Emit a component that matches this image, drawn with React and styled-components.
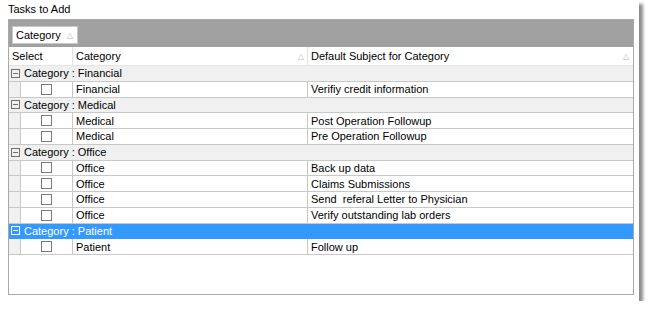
import React from 'react';
import styled, { createGlobalStyle } from 'styled-components';

// Global page styles
const GlobalStyle = createGlobalStyle`
  body {
    margin: 0;
    background: #ffffff;
    font-family: "Liberation Sans", Arial, sans-serif;
    font-size: 11px;
    color: #000000;
  }
`;

// Data
const groups = [
  { name: 'Financial', rows: [['Financial', 'Verifiy credit information']] },
  {
    name: 'Medical',
    rows: [
      ['Medical', 'Post Operation Followup'],
      ['Medical', 'Pre Operation Followup'],
    ],
  },
  {
    name: 'Office',
    rows: [
      ['Office', 'Back up data'],
      ['Office', 'Claims Submissions'],
      ['Office', 'Send  referal Letter to Physician'],
      ['Office', 'Verify outstanding lab orders'],
    ],
  },
  { name: 'Patient', selected: true, rows: [['Patient', 'Follow up']] },
];

// Window with drop shadow
const Window = styled.div`
  width: 639px;
  height: 301px;
  background: #ffffff;
  box-shadow: 4px 4px 3px rgba(0, 0, 0, 0.45);
  padding: 3px 0 0 8px;
  box-sizing: border-box;
`;

const Title = styled.div`
  height: 16px;
  line-height: 13px;
`;

const Grid = styled.div`
  width: 626px;
  height: 276px;
  border: 1px solid #a9a9a9;
  box-sizing: border-box;
  display: flex;
  flex-direction: column;
`;

const GroupPanel = styled.div`
  height: 27px;
  background: #a0a0a0;
  padding: 6px 0 0 3px;
  box-sizing: border-box;
`;

const Chip = styled.div`
  width: 66px;
  height: 18px;
  background: #ffffff;
  border: 1px solid #c8c8c8;
  box-sizing: border-box;
  display: flex;
  align-items: center;
  justify-content: space-between;
  padding: 0 4px 0 3px;
`;

const Tri = styled.span`
  color: #b8b8b8;
  font-size: 8px;
`;

const Row = styled.div`
  display: flex;
  flex: none;
  height: ${(p) => p.$h || 15.75}px;
  box-sizing: border-box;
  border-bottom: 1px solid ${(p) => p.$line || '#c8c8c8'};
  background: ${(p) => p.$bg || '#ffffff'};
  color: ${(p) => p.$color || '#000000'};
`;

const Cell = styled.div`
  width: ${(p) => p.$w}px;
  flex: ${(p) => (p.$w ? 'none' : '1')};
  display: flex;
  align-items: center;
  justify-content: ${(p) => (p.$center ? 'center' : 'space-between')};
  padding: 0 ${(p) => (p.$center ? 0 : 3)}px;
  box-sizing: border-box;
  border-right: 1px solid ${(p) => p.$line || '#c8c8c8'};
  white-space: pre;
`;

const Indent = styled.div`
  width: 12px;
  background: #f0f0f0;
  border-right: 1px solid #c8c8c8;
  box-sizing: border-box;
`;

const GroupLabel = styled.div`
  display: flex;
  align-items: center;
  gap: 4px;
  padding-left: 2px;
`;

const Box = styled.span`
  width: 9px;
  height: 9px;
  box-sizing: border-box;
  border: 1px solid ${(p) => p.$color};
  display: inline-flex;
  align-items: center;
  justify-content: center;
  &::after {
    content: '';
    width: 5px;
    height: 1px;
    background: ${(p) => p.$color};
  }
`;

const Check = styled.span`
  width: 11px;
  height: 11px;
  border: 1px solid #7a7a7a;
  background: #ffffff;
  box-sizing: border-box;
`;

const App = () => (
  <>
    <GlobalStyle />
    <Window>
      <Title>Tasks to Add</Title>
      <Grid>
        <GroupPanel>
          <Chip>
            Category <Tri>△</Tri>
          </Chip>
        </GroupPanel>
        <Row $h={19} $line="#e4e4e4">
          <Cell $w={64} $line="#e4e4e4">Select</Cell>
          <Cell $w={235} $line="#e4e4e4">
            Category <Tri>△</Tri>
          </Cell>
          <Cell $line="transparent">
            Default Subject for Category <Tri>△</Tri>
          </Cell>
        </Row>
        {groups.map((g) => (
          <React.Fragment key={g.name}>
            <Row
              $bg={g.selected ? '#3399ff' : '#f0f0f0'}
              $color={g.selected ? '#ffffff' : '#000000'}
              $line={g.selected ? '#3399ff' : '#c8c8c8'}
            >
              <GroupLabel>
                <Box $color={g.selected ? '#ffffff' : '#707070'} />
                Category : {g.name}
              </GroupLabel>
            </Row>
            {g.rows.map(([cat, subject]) => (
              <Row key={subject}>
                <Indent />
                <Cell $w={52} $center>
                  <Check />
                </Cell>
                <Cell $w={235}>{cat}</Cell>
                <Cell $line="transparent">{subject}</Cell>
              </Row>
            ))}
          </React.Fragment>
        ))}
      </Grid>
    </Window>
  </>
);

export default App;
